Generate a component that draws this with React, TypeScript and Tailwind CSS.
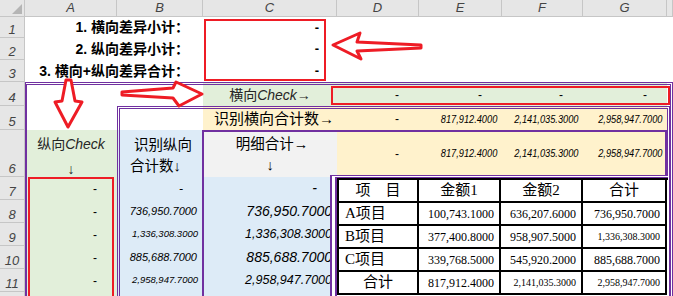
import React from "react";

const narrow = "font-['Liberation_Sans',sans-serif] italic";
const serif = "font-['Liberation_Serif','Noto_Sans_CJK_SC',serif]";
const hdr = "flex items-center justify-center border-b border-r border-[#c6c6c6] bg-[#e6e6e6] text-[13px] italic text-[#444]";
const rowHdr = "col-start-1 flex items-end justify-center pb-[1px] leading-[13px] border-b border-r border-[#c6c6c6] bg-[#e6e6e6] text-[13px] italic text-[#444]";

const rowStarts = ["row-start-2", "row-start-3", "row-start-4", "row-start-5", "row-start-6", "row-start-7", "row-start-8", "row-start-9", "row-start-10", "row-start-11", "row-start-12", "row-start-13"];

const bVals = [
  { v: "-", s: "text-[12px] pr-[20px]" },
  { v: "736,950.7000", s: "text-[11px] pr-[6px]" },
  { v: "1,336,308.3000", s: "text-[9.5px] pr-[5px]" },
  { v: "885,688.7000", s: "text-[11px] pr-[6px]" },
  { v: "2,958,947.7000", s: "text-[9.5px] pr-[5px]" },
];

const cVals = [
  { v: "-", s: "text-[14px] pr-[20px]" },
  { v: "736,950.7000", s: "text-[14px] pr-[5px]" },
  { v: "1,336,308.3000", s: "text-[12.5px] pr-[5px]" },
  { v: "885,688.7000", s: "text-[14px] pr-[5px]" },
  { v: "2,958,947.7000", s: "text-[12.5px] pr-[5px]" },
];

const tableRows = [
  ["A项目", "100,743.1000", "636,207.6000", "736,950.7000"],
  ["B项目", "377,400.8000", "958,907.5000", "1,336,308.3000"],
  ["C项目", "339,768.5000", "545,920.2000", "885,688.7000"],
  ["合计", "817,912.4000", "2,141,035.3000", "2,958,947.7000"],
];

const totals = ["817,912.4000", "2,141,035.3000", "2,958,947.7000"];

function Overlay() {
  return (
    <div className="pointer-events-none absolute inset-0">
      <div className="absolute left-[204px] top-[19px] h-[62px] w-[122px] border-2 border-[#ee1c25]" />
      <div className="absolute left-[331px] top-[86px] h-[19px] w-[339px] border-2 border-[#ee1c25]" />
      <div className="absolute left-[28px] top-[177px] h-[125px] w-[86px] border-2 border-[#ee1c25]" />
      <svg className="absolute inset-0" width="673" height="296" viewBox="0 0 673 296">
        <g fill="#fff" stroke="#ee1c25" strokeWidth="3" strokeLinejoin="round">
          <polygon points="333,45 360,33 357,42 421,45 421,48 357,51 361,59" />
          <polygon points="66,80 71,80 75,101 82,102 68,127 55,102 62,101" />
          <polygon points="122,92 173,88 176,82 202,94 179,106 173,98 122,95" />
        </g>
      </svg>
    </div>
  );
}

export default function App() {
  return (
    <div className="relative h-[296px] w-[673px] overflow-hidden bg-white text-black font-['Liberation_Sans','Noto_Sans_CJK_SC',sans-serif]">
      <div className="grid grid-cols-[25px_92px_86px_134px_82px_83px_81px_84px_6px] grid-rows-[17px_21px_22px_22px_24px_24px_47px_23px_23px_23px_23px_23px_23px]">
        {/* column headers */}
        <div className={`col-start-1 row-start-1 relative ${hdr}`}>
          <svg className="absolute bottom-[2px] right-[2px]" width="10" height="10" viewBox="0 0 10 10">
            <polygon points="10,0 10,10 0,10" fill="#b5b5b5" />
          </svg>
        </div>
        {["A", "B", "C", "D", "E", "F", "G", ""].map((c, i) => (
          <div key={i} className={`row-start-1 ${hdr}`}>
            {c}
          </div>
        ))}

        {/* row headers */}
        {[1, 2, 3, 4, 5, 6, 7, 8, 9, 10, 11, 0].map((n, i) => (
          <div key={i} className={`${rowHdr} ${rowStarts[i]}`}>
            {n > 0 ? n : null}
          </div>
        ))}

        {/* rows 1-3 */}
        {["1. 横向差异小计：", "2. 纵向差异小计：", "3. 横向+纵向差异合计："].map((t, i) => (
          <React.Fragment key={t}>
            <div className={`col-start-2 col-span-2 flex items-center justify-end whitespace-nowrap pr-[14px] text-[14px] font-bold ${rowStarts[i]}`}>
              {t}
            </div>
            <div className={`col-start-4 flex items-center justify-end pr-[18px] text-[13px] font-bold ${rowStarts[i]}`}>-</div>
          </React.Fragment>
        ))}

        {/* row 4 */}
        <div className="col-start-4 row-start-5 flex items-center justify-center bg-[#e2efda] pt-[2px] text-[14px] text-[#262626]">
          横向<i className="font-['Liberation_Sans']">Check</i>→
        </div>
        {["col-start-5", "col-start-6", "col-start-7", "col-start-8"].map((c) => (
          <div key={c} className={`${c} row-start-5 flex items-center justify-end bg-[#e2efda] pr-[20px] pt-[2px] text-[12px]`}>
            -
          </div>
        ))}

        {/* row 5 */}
        <div className="col-start-4 row-start-6 flex items-center justify-end whitespace-nowrap bg-[#fff2cc] pr-[3px] pt-[2px] text-[15px]">
          识别横向合计数→
        </div>
        <div className="col-start-5 row-start-6 flex items-center justify-end bg-[#fff2cc] pr-[20px] pt-[2px] text-[12px]">-</div>
        {totals.map((v, i) => (
          <div key={v} className={`${["col-start-6", "col-start-7", "col-start-8"][i]} row-start-6 flex items-center justify-end bg-[#fff2cc] pr-[5px] pt-[2px] text-[11px] ${narrow}`}>
            <span className="inline-block origin-right scale-x-[0.84]">{v}</span>
          </div>
        ))}

        {/* row 6 */}
        <div className="col-start-2 row-start-7 flex flex-col items-center bg-[#e2efda] pt-[4px] text-[14px] leading-[20px] text-[#262626]">
          <span>
            纵向<i className="font-['Liberation_Sans']">Check</i>
          </span>
          <span className="mt-[5px]">↓</span>
        </div>
        <div className="col-start-3 row-start-7 flex flex-col bg-[#ddebf7] pl-[13px] pt-[5px] text-[14.5px] leading-[21px]">
          <span className="pl-[4px]">识别纵向</span>
          <span>合计数↓</span>
        </div>
        <div className="col-start-4 row-start-7 flex flex-col items-center bg-[#f2f2f2] pt-[4px] text-[14.5px] leading-[20px]">
          <span className="pl-[4px]">明细合计→</span>
          <span className="mt-[1px]">↓</span>
        </div>
        <div className="col-start-5 row-start-7 flex items-center justify-end bg-[#fff2cc] pr-[20px] text-[12px]">-</div>
        {totals.map((v, i) => (
          <div key={v} className={`${["col-start-6", "col-start-7", "col-start-8"][i]} row-start-7 flex items-center justify-end bg-[#fff2cc] pr-[5px] text-[11px] ${narrow}`}>
            <span className="inline-block origin-right scale-x-[0.84]">{v}</span>
          </div>
        ))}

        {/* rows 7-11 */}
        {bVals.map((b, i) => (
          <React.Fragment key={i}>
            <div className={`col-start-2 flex items-center justify-end bg-[#e2efda] pr-[20px] text-[12px] ${rowStarts[i + 6]}`}>-</div>
            <div className={`col-start-3 flex items-center justify-end bg-[#ddebf7] ${narrow} ${b.s} ${rowStarts[i + 6]}`}>{b.v}</div>
            <div className={`col-start-4 flex items-center justify-end bg-[#ddebf7] italic ${cVals[i].s} ${rowStarts[i + 6]}`}>{cVals[i].v}</div>
          </React.Fragment>
        ))}
        <div className="col-start-2 row-start-13 bg-[#e2efda]" />
        <div className="col-start-3 row-start-13 bg-[#ddebf7]" />
        <div className="col-start-4 row-start-13 bg-[#ddebf7]" />

        {/* purple frames */}
        <div className="pointer-events-none col-start-2 col-end-10 row-start-5 row-end-14 border-l-2 border-r-[3px] border-t-[3px] border-double border-[#7030a0]" />
        <div className="pointer-events-none col-start-3 col-end-10 row-start-6 row-end-14 mr-[3px] border-l-[3px] border-r-[3px] border-t-[3px] border-double border-[#7030a0]" />
        <div className="pointer-events-none col-start-4 col-end-10 row-start-7 row-end-14 -ml-[1px] mr-[6px] border-l-2 border-r-2 border-t-2 border-[#7030a0]" />

        {/* detail table */}
        <div className={`col-start-5 col-span-4 row-start-8 row-span-6 -ml-[7px] -mt-[2px] mr-[-1px] border-l-[7px] border-t-[3px] border-double border-[#7030a0] bg-white ${serif}`}>
          <div className="grid grid-cols-[80px_82px_82px_84px] grid-rows-[23px_23px_23px_23px_23px] border-l-2 border-t-2 border-black">
            {["项　目", "金额1", "金额2", "合计"].map((h) => (
              <div key={h} className="flex items-center justify-center border-b-2 border-r-2 border-black text-[15px]">
                {h}
              </div>
            ))}
            {tableRows.map((r, ri) =>
              r.map((c, ci) => (
                <div
                  key={`${ri}-${ci}`}
                  className={`flex items-center border-b-2 border-r-2 border-black ${
                    ci === 0
                      ? ri === 3
                        ? "justify-center text-[15px]"
                        : "justify-start pl-[6px] text-[15px]"
                      : `justify-end pr-[5px] ${c.length > 12 ? "text-[10px]" : "text-[12px]"}`
                  }`}
                >
                  {c}
                </div>
              ))
            )}
          </div>
        </div>
      </div>
      <Overlay />
    </div>
  );
}
